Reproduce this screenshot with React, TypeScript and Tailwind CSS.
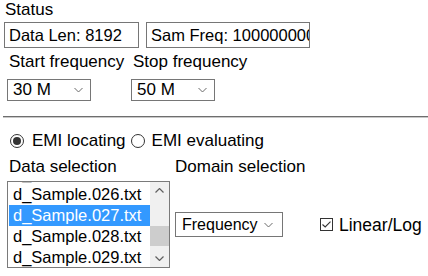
import React from 'react';

const font = { fontFamily: '"Liberation Sans", Arial, sans-serif' };

function Chevron({ className }: { className?: string }) {
  return (
    <svg className={className} width="9" height="5" viewBox="0 0 9 5" fill="none">
      <path d="M0.5 0.5 L4.5 4.5 L8.5 0.5" stroke="#6a6a6a" strokeWidth="1" />
    </svg>
  );
}

function FakeSelect({ value }: { value: string }) {
  return (
    <div className="relative flex h-[22px] w-[84px] items-center border border-[#767676] bg-white pl-[5px]">
      <span className="leading-[18px]">{value}</span>
      <Chevron className="absolute right-[7px] top-1/2 -translate-y-1/2" />
    </div>
  );
}

function Radio({ checked }: { checked?: boolean }) {
  return (
    <span className="flex h-[14px] w-[14px] items-center justify-center rounded-full border border-[#333] bg-white">
      {checked && <span className="h-[8px] w-[8px] rounded-full bg-[#333]" />}
    </span>
  );
}

const files = [
  'd_Sample.025.txt',
  'd_Sample.026.txt',
  'd_Sample.027.txt',
  'd_Sample.028.txt',
  'd_Sample.029.txt',
];

export default function App() {
  return (
    <div className="h-[276px] w-[428px] overflow-hidden bg-white text-[17px] text-black" style={font}>
      <div className="pl-[5px] pt-[1px] leading-[18px]">Status</div>

      <div className="mt-[3px] flex gap-[7px] pl-[4px] text-[16.5px]">
        <div className="flex h-[26px] w-[135px] items-center border border-[#767676] pl-[4px] leading-[18px]">
          Data Len: 8192
        </div>
        <div className="flex h-[26px] w-[164px] items-center overflow-hidden whitespace-nowrap border border-[#767676] pl-[4px] leading-[18px]">
          Sam Freq: 100000000
        </div>
      </div>

      <div className="mt-[5px] grid grid-cols-[124px_124px] pl-[7px]">
        <div className="whitespace-nowrap pl-[2px] leading-[18px]">Start frequency</div>
        <div className="whitespace-nowrap pl-[2px] leading-[18px]">Stop frequency</div>
        <div className="mt-[8px]">
          <FakeSelect value="30 M" />
        </div>
        <div className="mt-[8px]">
          <FakeSelect value="50 M" />
        </div>
      </div>

      <div className="ml-[3px] mt-[15px] border-t border-b border-t-[#6e6e6e] border-b-[#c8c8c8]" />

      <div className="mt-[14px] flex items-center leading-[18px]">
        <span className="ml-[10px]">
          <Radio checked />
        </span>
        <span className="ml-[8px]">EMI locating</span>
        <span className="ml-[5px]">
          <Radio />
        </span>
        <span className="ml-[7px]">EMI evaluating</span>
      </div>

      <div className="mt-[8px] flex leading-[18px]">
        <div className="w-[175px] pl-[9px]">Data selection</div>
        <div>Domain selection</div>
      </div>

      <div className="mt-[5px] flex items-center pl-[7px]">
        <div className="flex h-[87px] w-[163px] overflow-hidden border border-[#7a7a7a] bg-white text-[16.5px]">
          <div className="relative flex-1 overflow-hidden">
            <div className="-mt-[19px] pl-[1px]">
              {files.map((f) => (
                <div
                  key={f}
                  className={`h-[21px] whitespace-nowrap pl-[4px] leading-[21px] ${
                    f === 'd_Sample.027.txt' ? 'bg-[#3399ff] text-white' : ''
                  }`}
                >
                  {f}
                </div>
              ))}
            </div>
          </div>
          <div className="flex w-[19px] flex-col bg-[#f0f0f0]">
            <div className="flex h-[17px] items-center justify-center">
              <svg width="9" height="5" viewBox="0 0 9 5" fill="none">
                <path d="M0.5 4.5 L4.5 0.5 L8.5 4.5" stroke="#606060" strokeWidth="1.2" />
              </svg>
            </div>
            <div className="flex-1">
              <div className="mt-[27px] h-[20px] bg-[#cdcdcd]" />
            </div>
            <div className="flex h-[17px] items-center justify-center">
              <svg width="9" height="5" viewBox="0 0 9 5" fill="none">
                <path d="M0.5 0.5 L4.5 4.5 L8.5 0.5" stroke="#606060" strokeWidth="1.2" />
              </svg>
            </div>
          </div>
        </div>

        <div className="ml-[5px]">
          <div className="relative flex h-[25px] w-[108px] items-center border border-[#767676] bg-white pl-[6px] text-[16px]">
            <span className="leading-[18px]">Frequency</span>
            <Chevron className="absolute right-[9px] top-1/2 -translate-y-1/2" />
          </div>
        </div>

        <div className="ml-[37px] flex items-center leading-[18px]">
          <span className="flex h-[13px] w-[13px] items-center justify-center border border-[#333] bg-white">
            <svg width="9" height="7" viewBox="0 0 9 7" fill="none">
              <path d="M0.5 3.5 L3.2 6 L8.5 0.6" stroke="#333" strokeWidth="1.1" />
            </svg>
          </span>
          <span className="ml-[6px] text-[17.5px]">Linear/Log</span>
        </div>
      </div>
    </div>
  );
}
